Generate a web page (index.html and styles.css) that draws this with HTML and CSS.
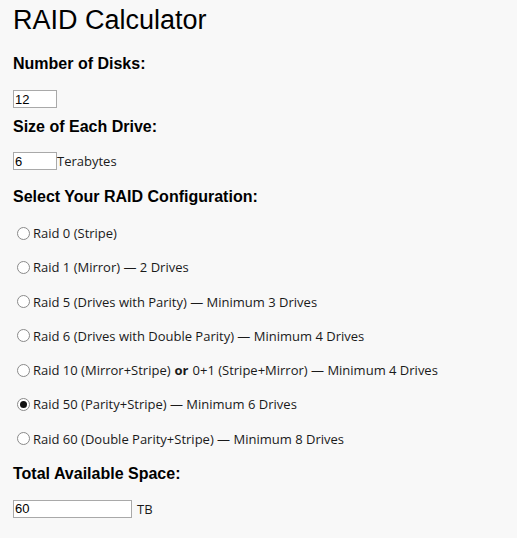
FILE: index.html
```html
<!DOCTYPE html>
<html lang="en">
<head>
    <meta charset="UTF-8">
    <meta name="viewport" content="width=device-width, initial-scale=1.0">
    <title>RAID Calculator</title>
    <link rel="stylesheet" href="styles.css">
</head>
<body>
    <h1>RAID Calculator</h1>

    <h2>Number of Disks:</h2>
    <div class="field">
        <input type="text" id="disks" class="small" value="12">
    </div>

    <h2 class="tight">Size of Each Drive:</h2>
    <div class="field spaced">
        <input type="text" id="size" class="small" value="6"><span class="unit">Terabytes</span>
    </div>

    <h2 class="tight">Select Your RAID Configuration:</h2>
    <div class="options">
        <label class="option"><input type="radio" name="raid" value="0">Raid 0 (Stripe)</label>
        <label class="option"><input type="radio" name="raid" value="1">Raid 1 (Mirror) &mdash; 2 Drives</label>
        <label class="option"><input type="radio" name="raid" value="5">Raid 5 (Drives with Parity) &mdash; Minimum 3 Drives</label>
        <label class="option"><input type="radio" name="raid" value="6">Raid 6 (Drives with Double Parity) &mdash; Minimum 4 Drives</label>
        <label class="option"><input type="radio" name="raid" value="10">Raid 10 (Mirror+Stripe) <b>or</b> 0+1 (Stripe+Mirror) &mdash; Minimum 4 Drives</label>
        <label class="option"><input type="radio" name="raid" value="50" checked>Raid 50 (Parity+Stripe) &mdash; Minimum 6 Drives</label>
        <label class="option"><input type="radio" name="raid" value="60">Raid 60 (Double Parity+Stripe) &mdash; Minimum 8 Drives</label>
    </div>

    <h2>Total Available Space:</h2>
    <div class="field">
        <input type="text" id="total" class="wide" value="60"><span class="unit gap">TB</span>
    </div>
</body>
</html>
```

FILE: styles.css
```css
body {
    margin: 0;
    padding: 5px 13px 0;
    background-color: #f8f8f8;
    font-family: "Open Sans", "Noto Sans", sans-serif;
    font-size: 13px;
    color: #1a1a1a;
}
h1 {
    font-family: "Liberation Sans", Arial, sans-serif;
    font-size: 27px;
    font-weight: normal;
    color: #000;
    margin: 0 0 19px;
}
h2 {
    font-family: "Liberation Sans", Arial, sans-serif;
    font-size: 16px;
    font-weight: bold;
    color: #000;
    margin: 0 0 17px;
}
h2.tight {
    margin-bottom: 16px;
}
.field {
    display: flex;
    align-items: center;
    height: 18px;
    margin-bottom: 10px;
}
.field.spaced {
    margin-bottom: 18px;
}
input[type="text"] {
    box-sizing: border-box;
    height: 18px;
    padding: 0 1px;
    border: 1px solid #a9a9a9;
    background-color: white;
    font-family: "Liberation Sans", Arial, sans-serif;
    font-size: 13px;
    color: #000;
}
.small {
    width: 44px;
}
.wide {
    width: 119px;
}
.unit.gap {
    margin-left: 5px;
}
.options {
    display: flex;
    flex-direction: column;
    gap: 16.3px;
    margin-top: 18px;
    margin-bottom: 17px;
}
.option {
    display: flex;
    align-items: center;
    height: 18px;
    line-height: 18px;
    white-space: nowrap;
}
.option b {
    font-weight: bold;
    margin: 0 4px;
}
input[type="radio"] {
    appearance: none;
    box-sizing: border-box;
    flex: none;
    width: 13px;
    height: 13px;
    margin: 0 3px 0 4px;
    border: 1px solid #8a8a8a;
    border-radius: 50%;
    background-color: white;
    display: flex;
    align-items: center;
    justify-content: center;
}
input[type="radio"]:checked::after {
    content: "";
    width: 7px;
    height: 7px;
    border-radius: 50%;
    background-color: #111;
}
```
